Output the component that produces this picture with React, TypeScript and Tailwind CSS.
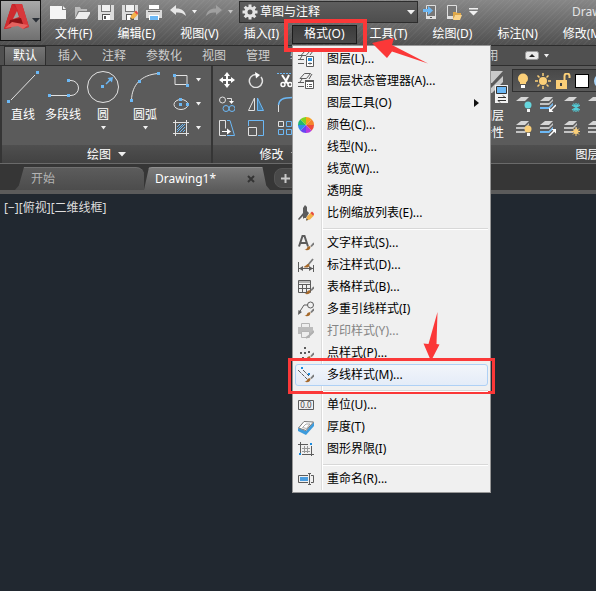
import type { ReactNode } from 'react';

const BLUE = '#6cb8f5';
const LIGHT = '#e2e2e2';
const DARK = '#5c5c5c';

type IconProps = { children: ReactNode; w?: number; h?: number };

function Icon({ children, w = 16, h = 16 }: IconProps) {
    return (
        <svg width={w} height={h} viewBox={`0 0 ${w} ${h}`} fill="none" className="block shrink-0" aria-hidden="true">
            {children}
        </svg>
    );
}

function Caret({ color = '#f0f0f0', big = false }: { color?: string; big?: boolean }) {
    return big ? (
        <Icon w={8} h={5}><path d="M0 0h8l-4 4.5z" fill={color} /></Icon>
    ) : (
        <Icon w={5} h={4}><path d="M0 0h5l-2.500 3.500z" fill={color} /></Icon>
    );
}

// small blue grip square
function Grip({ x, y, s = 3 }: { x: number; y: number; s?: number }) {
    return <rect x={x - s / 2} y={y - s / 2} width={s} height={s} fill={BLUE} />;
}

function Brush() {
    return (
        <>
            <path d="M16 8l-3 3.500" stroke="#7a7a7a" strokeWidth="1.800" />
            <path d="M12.500 11.500c-1.500-.8-3 .2-3.500 1.500-.4 1-1.500 1.500-2.500 1.500 2 1.500 6 1 6-3z" fill="#a5692b" />
        </>
    );
}

function Pencil() {
    return (
        <>
            <path d="M8 15.500l1-4 4-4 3 3-4 4z" fill="#f3b24a" />
            <path d="M12.500 8l1.500-1.500 2.500 2.500-1.500 1.500z" fill="#e5483f" />
            <path d="M8 15.500l.6-2.200 1.600 1.600z" fill="#555" />
        </>
    );
}

/* ---------- quick access toolbar ---------- */

const quickAccess = [
    { label: '新建', icon: <path d="M0 2h12v4h4v9H0zM13 2l3 3h-3z" fill="#f4f4f4" /> },
    {
        label: '打开',
        icon: (
            <>
                <path d="M1 14V3h5l1 2h6v2H4z" fill="#bdbdbd" />
                <path d="M5 8h12l-4 7H1z" fill="#ededed" />
            </>
        ),
    },
    {
        label: '保存',
        icon: (
            <>
                <path d="M0 1h16v15H0z" fill="#dcdcdc" />
                <path d="M3 1h10v7H3z" fill="#777" />
                <path d="M4 1h8v6H4z" fill="#f2f2f2" />
                <path d="M4 10h8v6H4z" fill="#555" />
                <path d="M5 11h7v5H5z" fill="#fff" />
                <path d="M6 12h2v3H6z" fill="#555" />
            </>
        ),
    },
    {
        label: '另存为',
        icon: (
            <>
                <path d="M0 1h16v15H0z" fill="#dcdcdc" />
                <path d="M3 1h10v7H3z" fill="#777" />
                <path d="M4 1h8v6H4z" fill="#f2f2f2" />
                <path d="M4 10h8v6H4z" fill="#555" />
                <path d="M5 11h4v5H5z" fill="#fff" />
                <Pencil />
            </>
        ),
    },
    {
        label: '打印',
        icon: (
            <>
                <path d="M3 1h10v4H3z" fill="#fff" />
                <path d="M0 6h16v8H0z" fill="#dadada" />
                <path d="M2 7h12v1H2z" fill="#666" />
                <path d="M3 11h10v5H3z" fill="#fff" />
                <path d="M4 12h8v4H4z" fill={BLUE} />
            </>
        ),
    },
];

function UndoArrow({ color }: { color: string }) {
    return <path d="M0 6l6-5v3.500c6 0 9 2.500 10 7.500-3-3-6-4-10-3.500V11z" fill={color} />;
}

function QuickToolbar() {
    return (
        <div className="flex h-[23px] shrink-0 items-center pl-[9px]">
            <div className="flex shrink-0 items-center gap-2">
                {quickAccess.map((q) => (
                    <button key={q.label} aria-label={q.label}><Icon>{q.icon}</Icon></button>
                ))}
                <button aria-label="放弃"><Icon><UndoArrow color="#e6e6e6" /></Icon></button>
            </div>
            <div className="ml-[6px] w-[14px] shrink-0"><Caret /></div>
            <button aria-label="重做" className="shrink-0">
                <Icon><g transform="matrix(-1 0 0 1 16 0)"><UndoArrow color="#a0a0a0" /></g></Icon>
            </button>
            <div className="ml-[6px] w-[11px] shrink-0"><Caret color="#c4c4c4" /></div>
            <div className="relative h-[22px] w-[179px] shrink-0 border border-[#2d2d2d] bg-gradient-to-b from-[#5e5e5e] to-[#4e4e4e]">
                <div className="pointer-events-none absolute left-[2px] top-[2px]"><Gear /></div>
                <select aria-label="工作空间" className="h-full w-full appearance-none pl-[20px] text-white outline-none">
                    <option>草图与注释</option>
                </select>
                <div className="pointer-events-none absolute right-[2px] top-[8px]"><Caret big /></div>
            </div>
            <div className="ml-[5px] flex shrink-0 items-center gap-[7px]">
                <button aria-label="打开移动设备"><Icon>
                    <path d="M3.500 1.500h9v13h-9z" fill="#777" stroke="#e0e0e0" />
                    <path d="M3 12h10v3H3z" fill="#e0e0e0" />
                    <path d="M7 13h2v1H7z" fill="#555" />
                    <path d="M0 5h5V2l5 4.500-5 4.500V8H0z" fill={BLUE} />
                </Icon></button>
                <button aria-label="保存到移动设备"><Icon>
                    <path d="M1.500 1.500h9v13h-9z" fill="#777" stroke="#e0e0e0" />
                    <path d="M1 12h6v3H1z" fill="#e0e0e0" />
                    <path d="M7 16V8h3l1 1h4v2H9z" fill="#e0a848" />
                    <path d="M9 11h7l-2 5H7z" fill="#fbd48a" />
                </Icon></button>
                <button aria-label="自定义快速访问工具栏"><Icon w={9} h={8}>
                    <path d="M0 0h9v1.500H0zM0 3h9L4.500 7.500z" fill="#f0f0f0" />
                </Icon></button>
            </div>
            <span className="ml-[94px] shrink-0 whitespace-nowrap text-[#e4e4e4]">Drawing1.dwg</span>
        </div>
    );
}

function Gear() {
    const teeth = [0, 45, 90, 135, 180, 225, 270, 315];
    return (
        <Icon>
            {teeth.map((a) => (
                <rect key={a} x="6.500" y="0.500" width="3" height="4" fill="#e4e4e4" transform={`rotate(${a} 8 8)`} />
            ))}
            <circle cx="8" cy="8" r="4" stroke="#e4e4e4" strokeWidth="3" />
        </Icon>
    );
}

/* ---------- drop-down menu ---------- */

type MenuEntry = { text: string; icon?: ReactNode; disabled?: boolean; submenu?: boolean; active?: boolean } | null;

const formatMenu: MenuEntry[] = [
    {
        text: '图层(L)...',
        icon: (
            <>
                <path d="M0 4.500h8L12 0M3 4.500L7 0M0 8.500h6M2 8l2-3M0 12.500h6M12 4l3-4" stroke={DARK} />
                <path d="M8.500 5.500h7v10h-7z" fill="#fff" stroke={DARK} />
                <path d="M10 7h4v3h-4z" fill="#2a94e0" />
                <path d="M10 12.500h4M12 11.500v2" stroke={DARK} />
            </>
        ),
    },
    {
        text: '图层状态管理器(A)...',
        icon: (
            <>
                <path d="M2 5.500L6.500.5h6L8.500 5.500zM0 9.500h6M2 9l2-3M0 13.500h6M11 6l3-5" stroke={DARK} />
                <path d="M7.500 7.500h8v8h-8z" fill="#fff" stroke={DARK} />
                <path d="M7 7h9v2H7z" fill={DARK} />
                <path d="M9 11.500h1m1 0h3M9 13.500h1m1 0h3" stroke={DARK} />
            </>
        ),
    },
    { text: '图层工具(O)', submenu: true },
    {
        text: '颜色(C)...',
        icon: (
            <>
                {['#f7a21b', '#f4842c', '#ee4a3a', '#b43be0', '#6a45f0', '#2f8de8', '#22b573', '#7ed321'].map((c, i) => (
                    <path key={c} d="M8 8V0a8 8 0 0 1 5.660 2.340z" fill={c} transform={`rotate(${i * 45} 8 8)`} />
                ))}
            </>
        ),
    },
    { text: '线型(N)...' },
    { text: '线宽(W)...' },
    { text: '透明度' },
    {
        text: '比例缩放列表(E)...',
        icon: (
            <>
                <path d="M7 0l2 2v4l2 2-3 5H6l-1 1v-3L1 15l-1-1 5-6V3z" fill={DARK} />
                <Pencil />
            </>
        ),
    },
    null,
    {
        text: '文字样式(S)...',
        icon: (
            <>
                <path d="M1 11.500L4.500 1h2L10 11.500M2.500 8h6" stroke={DARK} strokeWidth="2" />
                <Brush />
            </>
        ),
    },
    {
        text: '标注样式(D)...',
        icon: (
            <>
                <path d="M.5 5v10M15.500 8v7M1 11.500h14" stroke={DARK} />
                <path d="M1 11.500l4-2.500v5zM15 11.500l-4-2.500v5z" fill={DARK} />
                <path d="M15 2l-5 6" stroke="#7a7a7a" strokeWidth="1.800" />
                <path d="M10.500 7c-2 0-2.500 2-5 3 2 1 6 1 6-2z" fill="#a5692b" />
            </>
        ),
    },
    {
        text: '表格样式(B)...',
        icon: (
            <>
                <path d="M1 2h11v2H1z" fill="#b5b5b5" />
                <path d="M.5 1.500h12v12H.5zM.5 5.500h12M.5 9.500h12M4.500 5v8M8.500 5v8" stroke={DARK} />
                <Brush />
            </>
        ),
    },
    {
        text: '多重引线样式(I)',
        icon: (
            <>
                <circle cx="12.500" cy="4" r="3" stroke={DARK} />
                <path d="M9.500 4H6L1.500 11" stroke={DARK} />
                <path d="M0 14l.5-5L4 11z" fill={DARK} />
                <Brush />
            </>
        ),
    },
    {
        text: '打印样式(Y)...',
        disabled: true,
        icon: (
            <>
                <path d="M3.500 4V.5h8V4" fill="#eee" stroke="#b4b4b4" />
                <path d="M0 4h15v7H0z" fill="#bcbcbc" />
                <path d="M3.500 8.500h8v6h-8z" fill="#eee" stroke="#b4b4b4" />
                <path d="M16 8l-4 4-4 3" stroke="#b0b0b0" strokeWidth="2" />
            </>
        ),
    },
    {
        text: '点样式(P)...',
        icon: (
            <>
                <path d="M6 2h2v2H6zM2 7h2v2H2zM6 7h2v2H6zM10 6h2v2h-2zM4 12h2v2H4z" fill={DARK} />
                <Brush />
            </>
        ),
    },
    {
        text: '多线样式(M)...',
        active: true,
        icon: (
            <>
                <path d="M0 3l9 9M5 3l6 6" stroke={DARK} strokeDasharray="4 1" />
                <path d="M3 0h2v2H3zM10 6h2v2h-2z" fill="#1c8ce0" />
                <Brush />
            </>
        ),
    },
    null,
    {
        text: '单位(U)...',
        icon: (
            <>
                <path d="M.5 3.500h15v9H.5z" stroke={DARK} />
                <text x="8" y="11" textAnchor="middle" fontSize="8" fill="#444">0.0</text>
            </>
        ),
    },
    {
        text: '厚度(T)',
        icon: (
            <>
                <path d="M0 9l8 3 8-9v4l-8 9-8-4z" fill="#3d9bdc" />
                <path d="M.5 9L6 2.500l9.500.5L8 11.500z" fill="#fff" stroke="#777" />
                <path d="M4.500 8.500L8 5h4l-3.500 4.500z" stroke="#aaa" />
            </>
        ),
    },
    {
        text: '图形界限(I)',
        icon: (
            <>
                <path d="M2.500 1v11M13.500 5v10M0 3.500h10M4 13.500h12" stroke={DARK} />
                <path d="M6.500 5v7M9.500 5v7M4 7.500h8M4 10.500h8" stroke="#999" />
                <path d="M12 2h2v2h-2zM1 12h2v2H1z" fill="#1c8ce0" />
            </>
        ),
    },
    null,
    {
        text: '重命名(R)...',
        icon: (
            <>
                <path d="M10 4.500H.5v7H10M13 4.500h2.500v7H13M11.500 3v10M10 2.500h3M10 13.500h3" stroke={DARK} />
                <path d="M2 6h8v4H2z" fill="#4a9de0" />
            </>
        ),
    },
];

function FormatMenu() {
    return (
        <div role="menu" className="absolute left-0 top-full z-10 w-[199px] border border-[#979797] bg-[#f0f0f0] p-[2px] text-black">
            <div className="absolute bottom-[2px] left-[28px] top-[2px] w-[2px] border-l border-[#dcdcdc] bg-white" />
            {formatMenu.map((item, i) =>
                item === null ? (
                    <div key={i} className="flex h-2 items-end pb-[2px] pl-[28px]">
                        <div className="relative h-[2px] w-full border-t border-[#d8d8d8] bg-white" />
                    </div>
                ) : (
                    <button
                        key={i}
                        role="menuitem"
                        disabled={item.disabled}
                        className={`relative flex h-[22px] w-full items-center gap-[10px] whitespace-nowrap ${item.disabled ? 'text-[#858585]' : ''}`}
                    >
                        {item.active && (
                            <span className="absolute inset-0 rounded-[3px] border border-[#aed0f5] bg-gradient-to-b from-[#f2f5fa] to-[#e4ecf8]" />
                        )}
                        <span className="relative flex w-[22px] justify-center">
                            {item.icon && <Icon>{item.icon}</Icon>}
                        </span>
                        <span className="relative">{item.text}</span>
                        {item.submenu && (
                            <span className="ml-auto mr-[9px]"><Icon w={5} h={8}><path d="M0 0l5 4-5 4z" fill="#111" /></Icon></span>
                        )}
                        {item.active && (
                            <span className="pointer-events-none absolute -bottom-[8px] -left-[7px] -right-[7px] -top-[6px] border-3 border-[#fb3838]">
                                <svg width="17" height="50" viewBox="0 0 17 50" className="absolute bottom-full left-[132px]" aria-hidden="true">
                                    <path d="M14.500 1L13.500 33l3 .5L8 50 .5 32.500l5 .5z" fill="#fb3838" />
                                </svg>
                            </span>
                        )}
                    </button>
                ),
            )}
        </div>
    );
}

function MenuBar() {
    const before = ['文件(F)', '编辑(E)', '视图(V)', '插入(I)'];
    const after = ['工具(T)', '绘图(D)', '标注(N)', '修改(M)'];
    return (
        <nav className="flex h-[22px] shrink-0 items-center gap-px whitespace-nowrap pl-[2px] text-white">
            {before.map((m) => <button key={m} className="shrink-0 px-3">{m}</button>)}
            <div className="relative flex h-full shrink-0 items-center">
                <button aria-haspopup="menu" aria-expanded="true" className="h-[19px] border border-[#1c1c1c] bg-gradient-to-b from-[#3c3c3c] to-[#4a4a4a] px-[11px]">
                    格式(O)
                </button>
                <FormatMenu />
                <span className="pointer-events-none absolute -bottom-[7px] -left-[8px] -right-[10px] -top-[4px] z-20 border-4 border-[#fb3838]" />
                <svg width="58" height="28" viewBox="0 0 58 28" className="pointer-events-none absolute left-[80px] top-[15px] z-20" aria-hidden="true">
                    <path d="M0 5L22 0l-2 7 36 18.500L20 13.500 15 20z" fill="#fb3838" />
                </svg>
            </div>
            {after.map((m) => <button key={m} className="shrink-0 px-3">{m}</button>)}
        </nav>
    );
}

function Header() {
    return (
        <header className="relative z-10 flex border-b border-[#2c2c2c] bg-[repeating-linear-gradient(135deg,#ffffff0a_0px,#ffffff0a_1px,transparent_1px,transparent_4px),linear-gradient(#878787,#505050)]">
            <button aria-label="应用程序菜单" className="flex h-[41px] w-[41px] shrink-0 items-center gap-[3px] border border-[#151515] bg-gradient-to-b from-[#aaaaaa] to-[#707070] pb-[7px] pl-[3px]">
                <Icon w={25} h={28}>
                    <path d="M0 26L8 1h10l7 23-6 2-3-7-7-1-3 7z" fill="#c4262a" />
                    <path d="M11 1h7l7 23-6 1-5-16z" fill="#d8383b" />
                    <path d="M0 26L8 1l6 6-7 18z" fill="#cf2b2f" />
                    <path d="M6 17l11-2 2 6H5z" fill="#8c1216" />
                    <path d="M13 8l2 6-6 2z" fill="#a3a3a3" />
                    <path d="M1 25l7-6 16 3-5 4-5-3z" fill="#e5625f" />
                </Icon>
                <span className="pt-[7px]"><Caret big color="#2a2f36" /></span>
            </button>
            <div className="flex min-w-0 flex-1 flex-col">
                <QuickToolbar />
                <MenuBar />
            </div>
        </header>
    );
}

/* ---------- ribbon ---------- */

function RibbonTabs() {
    const tabs = ['插入', '注释', '参数化', '视图', '管理', '输出', '附加模块', 'A360', '精选应用'];
    return (
        <div className="flex h-[20px] items-stretch overflow-hidden border-b border-[#2e2e2e] bg-[#505050] pl-[2px] text-[#cdcdcd]">
            <button className="mx-[2px] shrink-0 border border-b-0 border-[#2e2e2e] bg-gradient-to-b from-[#767676] to-[#5c5c5c] px-2 text-white">默认</button>
            {tabs.map((t) => <button key={t} className="mx-[2px] shrink-0 px-2">{t}</button>)}
            <button aria-label="最小化功能区" className="ml-[17px] flex shrink-0 items-center gap-[5px]">
                <Icon w={14} h={10}>
                    <rect x="0.500" y="0.500" width="13" height="8" rx="2" fill="#e8e8e8" stroke="#999" />
                    <path d="M4 6l3-3 3 3z" fill="#222" />
                </Icon>
                <Caret />
            </button>
        </div>
    );
}

function Panel({ title, className, children }: { title: string; className: string; children: ReactNode }) {
    return (
        <section className={`flex flex-col border-r-2 border-[#353535] ${className}`}>
            <div className="flex h-[79px] bg-[#5b5b5b]">{children}</div>
            <button className="flex h-[18px] items-center justify-center gap-[7px] whitespace-nowrap bg-gradient-to-b from-[#4f4f4f] to-[#424242] pt-px text-white">
                {title}
                <Caret big />
            </button>
        </section>
    );
}

function BigTool({ label, width, caret, children }: { label: string; width: string; caret?: boolean; children: ReactNode }) {
    return (
        <button className={`flex shrink-0 flex-col items-center pt-1 ${width}`}>
            <Icon w={34} h={34}>{children}</Icon>
            <span className="mt-[3px] h-[16px] leading-4 text-white">{label}</span>
            {caret && <span className="mt-[3px]"><Caret /></span>}
        </button>
    );
}

const drawSmall = [
    {
        label: '矩形',
        icon: <><path d="M2 3.500h12v9H2z" stroke={LIGHT} /><Grip x={1.500} y={3.500} s={3} /><Grip x={14.500} y={13.500} s={3} /></>,
    },
    {
        label: '椭圆',
        icon: <><ellipse cx="8" cy="8.500" rx="7" ry="5" stroke={LIGHT} /><Grip x={7.500} y={3.500} s={3} /><Grip x={7.500} y={8.500} s={3} /><Grip x={14.500} y={8.500} s={3} /></>,
    },
    {
        label: '图案填充',
        icon: <><path d="M2.500 0v16M13.500 0v16M0 2.500h16M0 13.500h16" stroke={LIGHT} /><path d="M4 7l3-3M4 10l6-6M4 12l8-8M7 12l5-5M10 12l2-2" stroke={BLUE} /></>,
    },
];

function DrawPanel() {
    return (
        <Panel title="绘图" className="w-[213px] shrink-0 border-l-2 border-l-[#353535]">
            <BigTool label="直线" width="ml-[1px] w-[40px]">
                <path d="M5 30L29 5" stroke={LIGHT} /><Grip x={2.500} y={31.500} /><Grip x={31.500} y={2.500} />
            </BigTool>
            <BigTool label="多段线" width="w-[40px]">
                <path d="M4 25.500h18M22 10.500h3a7.500 7.500 0 0 1 0 15h-3" stroke={LIGHT} />
                <Grip x={3.500} y={25.500} /><Grip x={22.500} y={25.500} /><Grip x={22.500} y={10.500} />
            </BigTool>
            <BigTool label="圆" width="w-[40px]" caret>
                <circle cx="17" cy="17" r="15.500" stroke={LIGHT} />
                <Grip x={16.500} y={16.500} />
                <path d="M20 14l5-5" stroke={BLUE} strokeWidth="1.500" /><path d="M27 7l-1 5.500L21.500 8z" fill={BLUE} />
            </BigTool>
            <BigTool label="圆弧" width="ml-[1px] w-[42px]" caret>
                <path d="M3.500 30C4 15 13 5 30 3.500" stroke={LIGHT} />
                <Grip x={3.500} y={30.500} /><Grip x={11.500} y={11.500} /><Grip x={30.500} y={3.500} />
            </BigTool>
            <div className="ml-[7px] flex flex-col gap-2 pt-[6px]">
                {drawSmall.map((d) => (
                    <button key={d.label} aria-label={d.label} className="flex items-center gap-[7px]">
                        <Icon>{d.icon}</Icon>
                        <Caret />
                    </button>
                ))}
            </div>
        </Panel>
    );
}

const modifyTools = [
    { label: '移动', icon: <><path d="M8 2v12M2 8h12" stroke="#fff" strokeWidth="2" /><path d="M8 0l3 4H5zM8 16l3-4H5zM0 8l4-3v6zM16 8l-4-3v6z" fill="#fff" /></> },
    { label: '旋转', icon: <><path d="M13 5A6.500 6.500 0 1 1 8 2.500" stroke={LIGHT} strokeWidth="1.500" /><path d="M7 0l5 3-4 3.500z" fill="#fff" /></> },
    { label: '修剪', icon: <><path d="M0 1.500h16" stroke={BLUE} strokeDasharray="2 1" /><path d="M5 3l6 9M12 3L8 11" stroke="#fff" strokeWidth="2" /><circle cx="6" cy="12.500" r="2" stroke="#fff" strokeWidth="1.500" /><circle cx="13" cy="12.500" r="2" stroke="#fff" strokeWidth="1.500" /></> },
    { label: '复制', icon: <><circle cx="3.500" cy="4" r="3" stroke={LIGHT} /><circle cx="7" cy="12.500" r="3" stroke={BLUE} /><circle cx="13" cy="12.500" r="3" stroke={BLUE} /><path d="M8 2.500h4.500V6" stroke={LIGHT} /><path d="M10 5h5l-2.500 3z" fill="#fff" /></> },
    { label: '镜像', icon: <><path d="M6.500 2v12.500h-6z" stroke={LIGHT} /><path d="M9.500 2v12.500h6z" fill="#46799d" stroke={BLUE} /></> },
    { label: '圆角', icon: <><path d="M1.500 16V9" stroke={LIGHT} /><path d="M1.500 9C2 4 5 1.500 16 1.500" stroke={BLUE} strokeWidth="1.500" /></> },
    { label: '拉伸', icon: <><path d="M7 15.500H.5V.5h6v8" stroke={LIGHT} /><path d="M8 .5h3l4.500 15H8" stroke={BLUE} /><path d="M3 11.500h6" stroke="#fff" /><path d="M8 8.500l4 3-4 3z" fill="#fff" /></> },
    { label: '缩放', icon: <><path d="M.5 6V.5h15v15H10" stroke={BLUE} /><path d="M.5 7.500h8v8h-8z" stroke={LIGHT} /></> },
    { label: '阵列', icon: <><path d="M1.500 1.500h5v5h-5z" stroke={LIGHT} /><path d="M9.500 1.500h5v5h-5zM1.500 9.500h5v5h-5zM9.500 9.500h5v5h-5z" stroke={BLUE} /></> },
];

function ModifyPanel() {
    return (
        <Panel title="修改" className="w-[134px] shrink-0">
            <div className="grid grid-cols-[29px_29px_29px] content-start gap-y-2 pl-[6px] pt-[6px]">
                {modifyTools.map((m) => (
                    <button key={m.label} aria-label={m.label}><Icon>{m.icon}</Icon></button>
                ))}
            </div>
        </Panel>
    );
}

function Sheets({ stacked }: { stacked?: boolean }) {
    return (
        <>
            <path d="M5 1h8L9 5H0z" fill="#d6d6d6" />
            {stacked && <path d="M0 7h9l4-4v2L9 9H0zM0 11h9l4-4v2l-4 4H0z" fill="#c4c4c4" />}
        </>
    );
}

const snow = (
    <path d="M12 7v9M8 9l8 5M8 14l8-5M9.500 7.500l5 8M14.500 7.500l-5 8" stroke="#52cdd8" strokeWidth="1.200" />
);
const sunSmall = (
    <>
        <path d="M12 7v9M7.500 11.500h9M9 8.500l6 6M15 8.500l-6 6" stroke="#fbcf78" />
        <circle cx="12" cy="11.500" r="2.500" fill="#fbcf78" />
    </>
);

const layerTools = [
    { label: '关', icon: <><Sheets /><circle cx="12" cy="9" r="3.500" fill="#66d6dd" /><path d="M11 13h3v3h-3z" fill="#f4f4f4" /></> },
    { label: '隔离', icon: <><Sheets stacked /><path d="M0 11h9l4-4v2l-4 4H0z" fill={BLUE} /><path d="M16 9l-5 5" stroke="#fff" strokeWidth="1.500" /><path d="M9 16v-4.500L13.500 16z" fill="#fff" /></> },
    { label: '冻结', icon: <><Sheets />{snow}</> },
    { label: '锁定', icon: <Sheets /> },
    { label: '打开所有图层', icon: <><Sheets stacked /><circle cx="12" cy="9" r="3.500" fill="#fbcf78" /><path d="M11 13h3v3h-3z" fill="#f4f4f4" /></> },
    { label: '取消隔离', icon: <><Sheets stacked /><path d="M0 11h9l4-4v2l-4 4H0z" fill={BLUE} /><path d="M9 16l5-5" stroke="#fff" strokeWidth="1.500" /><path d="M16 9v4.500L11.500 9z" fill="#fff" /></> },
    { label: '解冻所有图层', icon: <><Sheets stacked />{sunSmall}</> },
    { label: '解锁', icon: <Sheets stacked /> },
];

function LayerPanel() {
    return (
        <Panel title="图层" className="ml-[124px] w-[250px] shrink-0">
            <button className="flex w-[41px] shrink-0 flex-col items-end pr-1 pt-1 text-center leading-[17px] text-white">
                <Icon w={34} h={36}>
                    <path d="M11 1h18L18 13H0zM3 18h14L29 6v6L18 23H0z" fill="#c9c9c9" />
                    <path d="M21 15h13v18H21z" fill="#f1f1f1" />
                    <path d="M22.500 16.500h10v7h-10z" fill={BLUE} stroke="#333" />
                    <path d="M24 27.500h8M24 30.500h8M29 25.500l2 2M26 32.500l-2-2" stroke="#333" />
                </Icon>
                <span className="mr-1 mt-px">图层<br />特性</span>
            </button>
            <div className="flex flex-1 flex-col pt-[3px]">
                <div className="flex h-[23px] items-center gap-[4px] border border-[#303030] bg-gradient-to-b from-[#484848] to-[#5a5a5a] pl-[2px]">
                    <Icon>
                        <circle cx="8" cy="5.500" r="5" fill="#fbcf78" /><path d="M5 9h6v2H5z" fill="#fbcf78" /><path d="M6 12h4v3H6z" fill="#fff" />
                    </Icon>
                    <Icon>
                        <circle cx="8" cy="8" r="4" fill="#fbcf78" />
                        <path d="M8 0v3M8 13v3M0 8h3M13 8h3M2.500 2.500l2 2M11.500 11.500l2 2M13.500 2.500l-2 2M4.500 11.500l-2 2" stroke="#fbcf78" strokeWidth="1.500" />
                    </Icon>
                    <Icon>
                        <path d="M1 7h11v9H1z" fill="#fbcf78" /><path d="M9.500 7V3a2.500 2.500 0 0 1 5 0v2" stroke="#fbcf78" strokeWidth="2" /><path d="M5 10h2v3H5z" fill="#444" />
                    </Icon>
                    <span className="h-[14px] w-[14px] shrink-0 border border-black bg-white" />
                    <Icon><circle cx="8" cy="8" r="7" fill="#a8d4f7" /></Icon>
                </div>
                <div className="mt-[4px] grid grid-cols-[24px_24px_24px_24px] gap-y-2 pl-[4px]">
                    {layerTools.map((l) => (
                        <button key={l.label} aria-label={l.label}><Icon>{l.icon}</Icon></button>
                    ))}
                </div>
            </div>
        </Panel>
    );
}

/* ---------- document tabs ---------- */

function DocumentTabs() {
    return (
        <div className="flex h-[31px] items-end border-b-4 border-[#5b5b5b] border-t border-t-[#6a6a6a] bg-[#363636] pl-[15px]">
            <button className="flex h-[23px] w-[129px] items-center rounded-t-lg border-t border-[#707070] bg-gradient-to-b from-[#5c5c5c] to-[#4c4c4c] pl-4 text-[#b4b4b4] [clip-path:polygon(0_100%,3%_80%,7%_0,100%_0,100%_100%)]">
                开始
            </button>
            <div className="flex h-[23px] w-[126px] items-center justify-between rounded-t-lg border-t border-[#909090] bg-gradient-to-b from-[#7a7a7a] to-[#5b5b5b] pl-[11px] pr-[15px] text-white [clip-path:polygon(0_100%,4%_0,94%_0,97%_80%,100%_100%)]">
                <button>Drawing1*</button>
                <button aria-label="关闭"><Icon w={8} h={8}><path d="M1 1l6 6M7 1L1 7" stroke="#343434" strokeWidth="2" /></Icon></button>
            </div>
            <button aria-label="新图形" className="mb-[2px] ml-[4px] flex h-[20px] w-[28px] items-center rounded-bl-lg rounded-tl-lg border border-[#555] bg-[#494949] pl-[6px]">
                <Icon w={9} h={9}><path d="M4.500 0v9M0 4.500h9" stroke="#c8c8c8" strokeWidth="2" /></Icon>
            </button>
        </div>
    );
}

export default function App() {
    return (
        <div className="min-h-screen overflow-hidden bg-[#212830] font-['Noto_Sans','Noto_Sans_CJK_SC',sans-serif] text-[12px] leading-4">
            <Header />
            <RibbonTabs />
            <div className="flex overflow-hidden">
                <DrawPanel />
                <ModifyPanel />
                <LayerPanel />
            </div>
            <DocumentTabs />
            <main className="px-1 pt-[6px] text-[#dedede]">[−][俯视][二维线框]</main>
        </div>
    );
}
